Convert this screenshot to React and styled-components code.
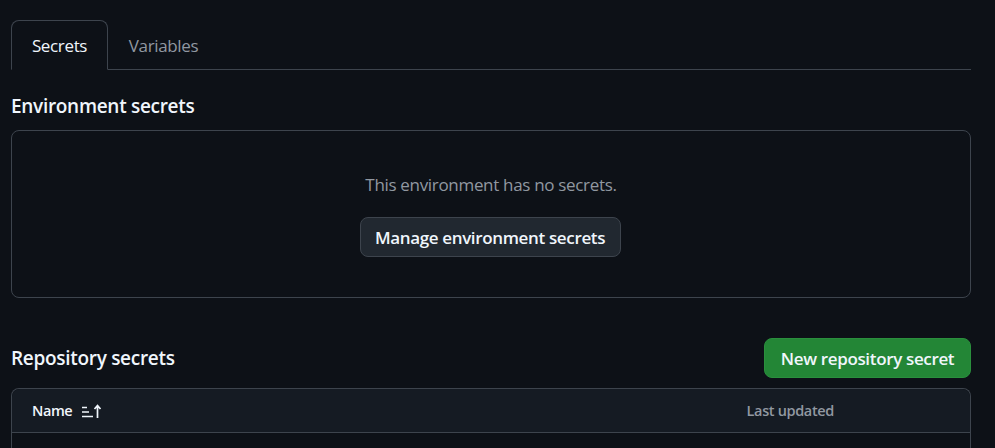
import React from 'react';
import styled, { createGlobalStyle } from 'styled-components';

const GlobalStyle = createGlobalStyle`
  html, body {
    margin: 0;
    height: 100%;
    background: #0d1117;
    overflow: hidden;
  }
  body {
    font-family: "Open Sans", "Noto Sans", "Liberation Sans", sans-serif;
    color: #f0f6fc;
  }
`;

const Page = styled.div`
  padding: 20px 24px 0 11px;
  height: 448px;
  box-sizing: border-box;
  overflow: hidden;
`;

const TabBar = styled.div`
  display: flex;
  height: 50px;
  border-bottom: 1px solid #3d444d;
  box-sizing: border-box;
`;

const Tab = styled.div`
  width: ${(p) => p.$width}px;
  height: 50px;
  box-sizing: border-box;
  display: flex;
  align-items: center;
  justify-content: center;
  font-size: 17px;
  letter-spacing: -0.35px;
  color: ${(p) => (p.$active ? '#f0f6fc' : '#9198a1')};
  border: 1px solid ${(p) => (p.$active ? '#3d444d' : 'transparent')};
  border-bottom: ${(p) => (p.$active ? '1px solid #0d1117' : 'none')};
  border-radius: 8px 8px 0 0;
`;

const SectionHeader = styled.div`
  display: flex;
  align-items: center;
  justify-content: space-between;
  height: 40px;
  margin-top: ${(p) => p.$top}px;
`;

const Title = styled.h3`
  margin: 0;
  font-size: 19px;
  font-weight: 600;
  letter-spacing: -0.3px;
`;

const EmptyBox = styled.div`
  margin-top: 4px;
  height: 168px;
  box-sizing: border-box;
  border: 1px solid #3d444d;
  border-radius: 8px;
  display: flex;
  flex-direction: column;
  align-items: center;
  padding-top: 40px;
`;

const EmptyText = styled.p`
  margin: 0;
  font-size: 17px;
  line-height: 28px;
  letter-spacing: -0.32px;
  color: #9198a1;
`;

const Button = styled.button`
  font-family: inherit;
  font-size: 17px;
  font-weight: 600;
  letter-spacing: -0.35px;
  height: ${(p) => p.$height}px;
  width: ${(p) => p.$width}px;
  padding: 0;
  border-radius: 8px;
  color: #f0f6fc;
  background: ${(p) => (p.$primary ? '#238636' : '#212830')};
  border: 1px solid ${(p) => (p.$primary ? '#2a8f3d' : '#3d444d')};
`;

const ManageButton = styled(Button)`
  margin: 18px 2px 0 0;
`;

const Table = styled.div`
  margin-top: 10px;
  height: 100px;
  border: 1px solid #3d444d;
  border-bottom: none;
  border-radius: 8px 8px 0 0;
  box-sizing: border-box;
`;

const TableHead = styled.div`
  display: flex;
  align-items: center;
  justify-content: space-between;
  height: 44px;
  box-sizing: border-box;
  background: #151b23;
  border-bottom: 1px solid #3d444d;
  border-radius: 8px 8px 0 0;
  padding: 0 136px 0 20px;
`;

const NameCell = styled.div`
  display: flex;
  align-items: center;
  gap: 10px;
  font-size: 14.5px;
  font-weight: 600;
  letter-spacing: -0.42px;
`;

const UpdatedCell = styled.div`
  font-size: 14.5px;
  font-weight: 600;
  letter-spacing: -0.35px;
  color: #9198a1;
`;

const SortIcon = () => (
  <svg width="21" height="14" viewBox="0 0 21 14" fill="none" stroke="#f0f6fc" strokeWidth="1.3">
    <path d="M0 3.5h5M0 8h7M0 12.5h11" />
    <path d="M15.5 14V1.5M12.5 5l3-3.5 3 3.5" strokeWidth="1.7" />
  </svg>
);

export default function App() {
  return (
    <Page>
      <GlobalStyle />
      <TabBar>
        <Tab $active $width={97}>Secrets</Tab>
        <Tab $width={111}>Variables</Tab>
      </TabBar>
      <SectionHeader $top={16}>
        <Title>Environment secrets</Title>
      </SectionHeader>
      <EmptyBox>
        <EmptyText>This environment has no secrets.</EmptyText>
        <ManageButton $width={261} $height={40}>Manage environment secrets</ManageButton>
      </EmptyBox>
      <SectionHeader $top={40}>
        <Title>Repository secrets</Title>
        <Button $primary $width={207} $height={40}>New repository secret</Button>
      </SectionHeader>
      <Table>
        <TableHead>
          <NameCell>
            Name
            <SortIcon />
          </NameCell>
          <UpdatedCell>Last updated</UpdatedCell>
        </TableHead>
      </Table>
    </Page>
  );
}
